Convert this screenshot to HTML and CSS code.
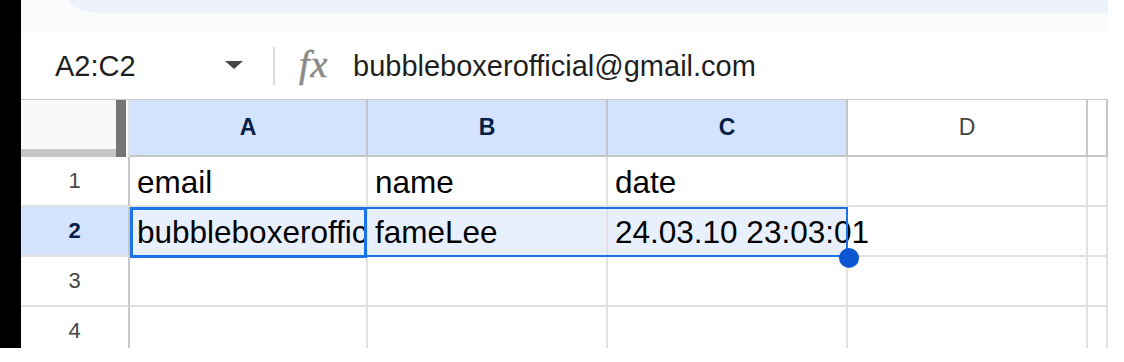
FILE: index.html
```html
<!DOCTYPE HTML>
<html>

<head>
    <title>Sheet</title>
    <meta name="viewport" content="width=device-width, initial-scale=1">
    <link rel="stylesheet" href="styles.css">
</head>

<body>
    <div class="screen">
        <div class="edge"></div>
        <div class="app">
            <div class="toolbar">
                <div class="pill"></div>
            </div>
            <div class="formulabar">
                <div class="namebox">A2:C2</div>
                <svg class="caret" width="18" height="8" viewBox="0 0 18 8"><path d="M0 0H18L9 8Z" /></svg>
                <div class="divider"></div>
                <div class="fx">fx</div>
                <div class="formula">bubbleboxerofficial@gmail.com</div>
            </div>
            <div class="grid">
                <!-- header row -->
                <div class="corner">
                    <div class="corner-fill"></div>
                    <div class="freeze"></div>
                </div>
                <div class="colhead picked">A</div>
                <div class="colhead picked">B</div>
                <div class="colhead picked">C</div>
                <div class="colhead">D</div>
                <div class="colhead"></div>

                <!-- row 1 -->
                <div class="rowhead">1</div>
                <div class="cell">email</div>
                <div class="cell">name</div>
                <div class="cell">date</div>
                <div class="cell"></div>
                <div class="cell"></div>

                <!-- row 2 -->
                <div class="rowhead picked">2</div>
                <div class="cell inrange clip">bubbleboxerofficial@gmail.com</div>
                <div class="cell inrange">fameLee</div>
                <div class="cell inrange spill">24.03.10 23:03:01</div>
                <div class="cell"></div>
                <div class="cell"></div>

                <!-- row 3 -->
                <div class="rowhead">3</div>
                <div class="cell"></div>
                <div class="cell"></div>
                <div class="cell"></div>
                <div class="cell"></div>
                <div class="cell"></div>

                <!-- row 4 -->
                <div class="rowhead">4</div>
                <div class="cell"></div>
                <div class="cell"></div>
                <div class="cell"></div>
                <div class="cell"></div>
                <div class="cell"></div>

                <div class="range"></div>
                <div class="active"></div>
                <div class="handle"></div>
            </div>
        </div>
    </div>
</body>

</html>
```

FILE: styles.css
```css
html {
    font-family: "Liberation Sans", Arial, Helvetica, sans-serif;
}

body {
    margin: 0;
    background-color: #fff;
}

.screen {
    display: flex;
    height: 348px;
}

.edge {
    width: 21px;
    background-color: #000;
}

.app {
    width: 1087px;
    overflow: hidden;
    background-color: #fff;
}

.toolbar {
    height: 33px;
    background-color: #f9fbfd;
    padding-left: 48px;
}

.pill {
    height: 13px;
    background-color: #edf2fa;
    border-bottom-left-radius: 32px 13px;
}

.formulabar {
    display: flex;
    align-items: center;
    height: 67px;
    box-sizing: border-box;
    padding-left: 34px;
    border-bottom: 1px solid #c4c7c5;
}

.namebox {
    width: 170px;
    font-size: 29px;
    color: #1f1f1f;
}

.caret {
    fill: #444746;
    margin-top: -3px;
}

.divider {
    width: 2px;
    height: 38px;
    margin-left: 30px;
    background-color: #dadce0;
}

.fx {
    width: 32px;
    margin-left: 24px;
    font-family: "Liberation Serif", "Times New Roman", serif;
    font-style: italic;
    font-size: 38px;
    letter-spacing: 1px;
    color: #8a8a8a;
    margin-top: -4px;
    -webkit-text-stroke: 0.6px #8a8a8a;
}

.formula {
    margin-left: 22px;
    font-size: 29px;
    color: #1f1f1f;
}

.grid {
    position: relative;
    display: grid;
    grid-template-columns: 109px 238px 240px 240px 240px 20px;
    grid-template-rows: 57px 50px 50px 50px 50px;
}

.corner {
    display: flex;
    background-color: #f8f9fb;
    padding-right: 2px;
    box-sizing: border-box;
    border-right: 2px solid #dfe3e8;
}

.corner-fill {
    flex: 1;
    border-bottom: 8px solid #c4c7c5;
}

.freeze {
    width: 10px;
    background-color: #747775;
}

.colhead {
    display: flex;
    align-items: center;
    justify-content: center;
    font-size: 23px;
    color: #444746;
    border-right: 2px solid #c4c7c5;
    border-bottom: 2px solid #c4c7c5;
}

.colhead.picked {
    background-color: #d3e3fd;
    color: #041e49;
    font-weight: bold;
}

.rowhead {
    display: flex;
    align-items: center;
    justify-content: center;
    font-size: 22px;
    color: #444746;
    border-right: 2px solid #c4c7c5;
    border-bottom: 2px solid #e1e1e1;
}

.rowhead.picked {
    background-color: #d3e3fd;
    color: #041e49;
    font-weight: bold;
}

.cell {
    display: flex;
    align-items: flex-end;
    padding: 0 0 7px 7px;
    font-size: 31.5px;
    line-height: 31px;
    color: #000;
    white-space: nowrap;
    border-right: 2px solid #e1e1e1;
    border-bottom: 2px solid #e1e1e1;
    min-width: 0;
}

.cell.inrange {
    background-color: #e8f0fe;
}

.cell.clip {
    overflow: hidden;
}

.cell.spill {
    overflow: visible;
}

.range {
    position: absolute;
    left: 109px;
    top: 107px;
    width: 718px;
    height: 50px;
    box-sizing: border-box;
    border: 2px solid #1a73e8;
}

.active {
    position: absolute;
    left: 109px;
    top: 107px;
    width: 237px;
    height: 51px;
    box-sizing: border-box;
    border: 3px solid #1a73e8;
}

.handle {
    position: absolute;
    left: 818px;
    top: 148px;
    width: 20px;
    height: 20px;
    border-radius: 50%;
    background-color: #0b57d0;
}
```
